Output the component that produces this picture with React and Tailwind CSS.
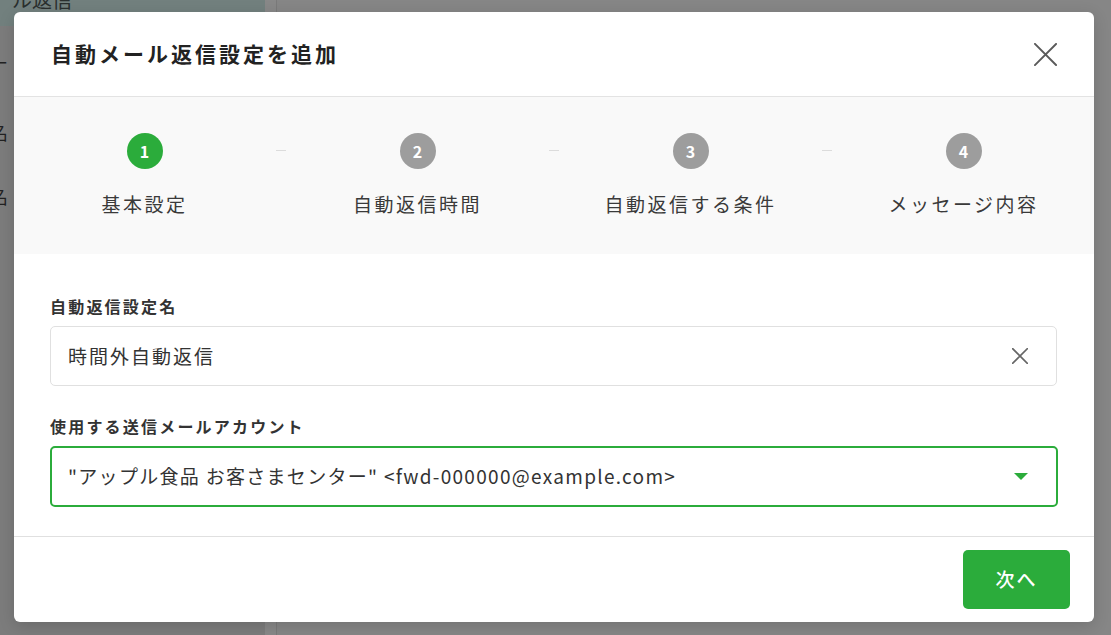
import { useState } from 'react';

const steps = ['基本設定', '自動返信時間', '自動返信する条件', 'メッセージ内容'];

function CloseIcon({ className, width = 2 }) {
  return (
    <svg viewBox="0 0 24 24" className={className} fill="none" stroke="currentColor" strokeWidth={width} strokeLinecap="square">
      <path d="M1 1L23 23M23 1L1 23" />
    </svg>
  );
}

export default function App() {
  const [name, setName] = useState('時間外自動返信');

  return (
    <div className="relative w-[1111px] h-[635px] overflow-hidden bg-[#858585] font-['Noto_Sans_CJK_JP','Noto_Sans',sans-serif]">
      {/* page behind the overlay */}
      <div className="flex h-full">
        <aside className="w-[265px] shrink-0 flex flex-col bg-[#7c7c7c]">
          <div className="h-[26px] bg-[#72807e] overflow-hidden">
            <p className="pl-[12px] -mt-[12px] text-[20px] leading-[24px] text-[#2a2f2e]">ル返信</p>
          </div>
          <div className="flex flex-col text-[18px] text-[#222] -ml-[10px]">
            <span className="mt-[22px] leading-[28px]">ー</span>
            <span className="mt-[42px] leading-[28px]">名</span>
            <span className="mt-[36px] leading-[28px]">名</span>
          </div>
        </aside>
        <div className="w-[12px] shrink-0 bg-[#888] border-r border-[#7a7a7a]" />
        <div className="flex-1 bg-[#868686]" />
      </div>

      {/* modal */}
      <div className="absolute left-[14px] top-[12px] w-[1080px] h-[610px] rounded-[6px] bg-white shadow-[0_4px_16px_rgba(0,0,0,0.15)] flex flex-col overflow-hidden">
        {/* Header */}
        <div className="h-[85px] shrink-0 flex items-center justify-between pl-[37px] pr-[37px] border-b border-[#e3e3e3]">
          <h2 className="text-[21px] font-bold tracking-[3px] text-[#222]">自動メール返信設定を追加</h2>
          <button className="text-[#5a5a5a]">
            <CloseIcon className="w-[23px] h-[23px]" />
          </button>
        </div>

        {/* Stepper */}
        <div className="h-[157px] shrink-0 bg-[#f9f9f9] flex justify-center pt-[36px]">
          {steps.map((label, i) => (
            <div key={label} className="flex items-start">
              {i > 0 && <div className="w-[10px] h-px mx-[10px] mt-[17px] bg-[#dcdcdc]" />}
              <div className="w-[243px] flex flex-col items-center">
                <div
                  className={
                    i === 0
                      ? 'w-[36px] h-[36px] rounded-full bg-[#2bac3b] flex items-center justify-center text-white text-[16px] font-bold'
                      : 'w-[36px] h-[36px] rounded-full bg-[#9d9d9d] flex items-center justify-center text-white text-[16px] font-bold'
                  }
                >
                  {i + 1}
                </div>
                <p className="mt-[22px] text-[19px] leading-[26px] tracking-[2.5px] text-[#3a3a3a]">{label}</p>
              </div>
            </div>
          ))}
        </div>

        {/* Body */}
        <div className="flex-1 px-[36px] pt-[40px] border-b border-[#e0e0e0]">
          <label className="block text-[16px] leading-[24px] font-bold tracking-[2.2px] text-[#333]">自動返信設定名</label>
          <div className="mt-[8px] h-[60px] w-[1007px] rounded-[5px] border border-[#e0e0e0] flex items-center pl-[17px] pr-[28px]">
            <input
              value={name}
              onChange={(e) => setName(e.target.value)}
              className="flex-1 bg-transparent outline-none text-[19px] tracking-[2px] text-[#333]"
            />
            <button className="text-[#666]">
              <CloseIcon className="w-[16px] h-[16px]" width={2.4} />
            </button>
          </div>

          <label className="block mt-[28px] text-[16px] leading-[24px] font-bold tracking-[2.2px] text-[#333]">使用する送信メールアカウント</label>
          <div className="mt-[8px] h-[61px] w-[1008px] rounded-[5px] border-2 border-[#2bac3b] flex items-center pl-[16px] pr-[28px]">
            <span className="flex-1 text-[19px] tracking-[1.3px] text-[#333]">"アップル食品 お客さまセンター" &lt;fwd-000000@example.com&gt;</span>
            <svg viewBox="0 0 14 7" className="w-[14px] h-[7px] fill-[#2bac3b]">
              <path d="M0 0H14L7 7Z" />
            </svg>
          </div>
        </div>

        {/* Footer */}
        <div className="h-[85px] shrink-0 flex items-center justify-end pr-[24px]">
          <button className="w-[107px] h-[59px] rounded-[5px] bg-[#2bac3b] text-white text-[19px] font-medium tracking-[2px]">次へ</button>
        </div>
      </div>
    </div>
  );
}
